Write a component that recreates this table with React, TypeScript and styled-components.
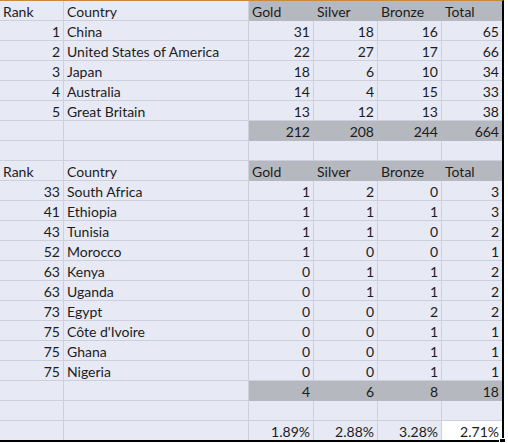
import styled, { createGlobalStyle } from "styled-components";

const GlobalStyle = createGlobalStyle`
  html, body {
    margin: 0;
    padding: 0;
    background: #ffffff;
  }
`;

type Fill = "none" | "gray" | "white";
type Align = "left" | "right";

interface CellSpec {
  text?: string | number;
  align?: Align;
  fill?: Fill;
}

const GRID = "#cdd0dc";
const GRAY = "#b5b8bf";

const Frame = styled.div`
  position: relative;
  width: 504px;
`;

const Sheet = styled.div`
  display: grid;
  grid-template-columns: 64px 185px 65px 64px 64px 60px;
  grid-template-rows: repeat(21, 20px) 19px;
  border-top: 1px solid #c98a3c;
  border-right: 2px solid #000000;
  border-bottom: 2px solid #000000;
  background: #e7e9f4;
  font-family: Lato, "Open Sans", sans-serif;
  font-size: 14px;
  color: #1c1c1c;
`;

const Cell = styled.div<{ $align: Align; $fill: Fill; $lastCol: boolean; $lastRow: boolean }>`
  box-sizing: border-box;
  display: flex;
  align-items: center;
  justify-content: ${(p) => (p.$align === "right" ? "flex-end" : "flex-start")};
  padding: 2px 3px 0 3px;
  white-space: nowrap;
  background: ${(p) => (p.$fill === "gray" ? GRAY : p.$fill === "white" ? "#ffffff" : "transparent")};
  border-right: ${(p) => (p.$lastCol ? "none" : `1px solid ${p.$fill === "gray" ? GRAY : GRID}`)};
  border-bottom: ${(p) => (p.$lastRow ? "none" : `1px solid ${p.$fill === "gray" ? GRAY : GRID}`)};
`;

const FillHandle = styled.div`
  position: absolute;
  right: -2px;
  bottom: -3px;
  width: 5px;
  height: 5px;
  background: #000000;
  border: 1px solid #ffffff;
`;

const top = [
  [1, "China", 31, 18, 16, 65],
  [2, "United States of America", 22, 27, 17, 66],
  [3, "Japan", 18, 6, 10, 34],
  [4, "Australia", 14, 4, 15, 33],
  [5, "Great Britain", 13, 12, 13, 38],
];

const african = [
  [33, "South Africa", 1, 2, 0, 3],
  [41, "Ethiopia", 1, 1, 1, 3],
  [43, "Tunisia", 1, 1, 0, 2],
  [52, "Morocco", 1, 0, 0, 1],
  [63, "Kenya", 0, 1, 1, 2],
  [63, "Uganda", 0, 1, 1, 2],
  [73, "Egypt", 0, 0, 2, 2],
  [75, "Côte d'Ivoire", 0, 0, 1, 1],
  [75, "Ghana", 0, 0, 1, 1],
  [75, "Nigeria", 0, 0, 1, 1],
];

const header = (): CellSpec[] => [
  { text: "Rank" },
  { text: "Country" },
  { text: "Gold", fill: "gray" },
  { text: "Silver", fill: "gray" },
  { text: "Bronze", fill: "gray" },
  { text: "Total", fill: "gray" },
];

const dataRow = (r: (string | number)[]): CellSpec[] =>
  r.map((v, i) => ({ text: v, align: i === 1 ? "left" : "right" }));

const totalRow = (t: number[]): CellSpec[] => [
  {},
  {},
  ...t.map((v) => ({ text: v, align: "right" as Align, fill: "gray" as Fill })),
];

const blank = (): CellSpec[] => [{}, {}, {}, {}, {}, {}];

const rows: CellSpec[][] = [
  header(),
  ...top.map(dataRow),
  totalRow([212, 208, 244, 664]),
  blank(),
  header(),
  ...african.map(dataRow),
  totalRow([4, 6, 8, 18]),
  blank(),
  [
    {},
    {},
    { text: "1.89%", align: "right" },
    { text: "2.88%", align: "right" },
    { text: "3.28%", align: "right" },
    { text: "2.71%", align: "right", fill: "white" },
  ],
];

export default function App() {
  return (
    <>
      <GlobalStyle />
      <Frame>
        <Sheet>
          {rows.map((row, ri) =>
            row.map((c, ci) => (
              <Cell
                key={`${ri}-${ci}`}
                $align={c.align ?? "left"}
                $fill={c.fill ?? "none"}
                $lastCol={ci === row.length - 1}
                $lastRow={ri === rows.length - 1}
              >
                {c.text}
              </Cell>
            ))
          )}
        </Sheet>
        <FillHandle />
      </Frame>
    </>
  );
}
